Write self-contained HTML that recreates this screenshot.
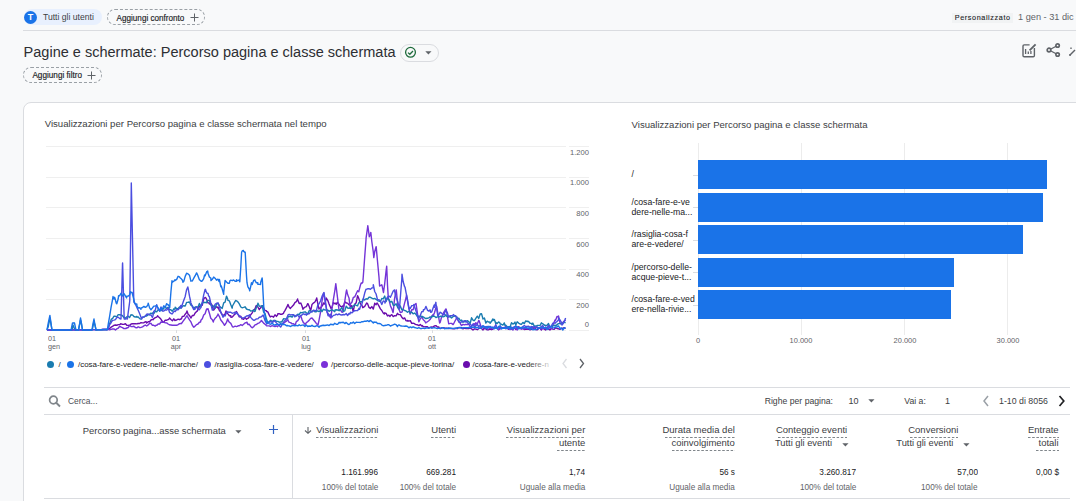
<!DOCTYPE html>
<html><head><meta charset="utf-8"><style>
html,body{margin:0;padding:0;}
body{width:1080px;height:501px;overflow:hidden;position:relative;background:#f8f9fa;font-family:"Liberation Sans", sans-serif;}
.t{position:absolute;white-space:nowrap;z-index:3;}
</style></head><body>
<div style="position:absolute;left:1076px;top:0px;width:4px;height:501px;background:#fff;z-index:5"></div>
<div style="position:absolute;left:24px;top:9px;width:78px;height:16px;background:#e8f0fe;border-radius:8px"></div>
<div style="position:absolute;left:24px;top:11px;width:13px;height:13px;background:#1a73e8;border-radius:50%"></div>
<div class="t" style="left:-269.50px;width:600px;text-align:center;top:12.88px;font-size:9px;line-height:9px;color:#fff;font-weight:700;">T</div>
<div class="t" style="left:43.00px;top:12.72px;font-size:8.6px;line-height:8.6px;color:#3c4043;font-weight:400;">Tutti gli utenti</div>
<div style="position:absolute;left:107px;top:9px;width:98px;height:16px;border:1px dashed #9aa0a6;border-radius:8px;box-sizing:border-box"></div>
<div class="t" style="left:116.60px;top:14.70px;font-size:8.15px;line-height:8.15px;color:#202124;font-weight:400;-webkit-text-stroke:0.15px #202124;">Aggiungi confronto</div>
<svg style="position:absolute;left:190px;top:12.5px" width="9" height="9" viewBox="0 0 9 9"><path d="M4.5 0.5V8.5M0.5 4.5H8.5" stroke="#5f6368" stroke-width="1"/></svg>
<div style="position:absolute;left:952px;top:13px;width:61px;height:10px;background:#f1f3f4"></div>
<div class="t" style="left:954.80px;top:14.11px;font-size:7.2px;line-height:7.2px;color:#202124;font-weight:400;letter-spacing:0.62px;-webkit-text-stroke:0.1px #202124;">Personalizzato</div>
<div class="t" style="left:1018.00px;top:13.21px;font-size:9.2px;line-height:9.2px;color:#5f6368;font-weight:400;">1 gen - 31 dic</div>
<div style="position:absolute;left:23px;top:30px;width:1053px;height:1px;background:#dadce0"></div>
<div class="t" style="left:23.60px;top:44.51px;font-size:14.52px;line-height:14.52px;color:#2d2f33;font-weight:400;">Pagine e schermate: Percorso pagina e classe schermata</div>
<div style="position:absolute;left:399.5px;top:43.5px;width:39px;height:18px;border:1px solid #dadce0;border-radius:9px;box-sizing:border-box"></div>
<svg style="position:absolute;left:404px;top:46px" width="13" height="13" viewBox="0 0 13 13"><circle cx="6.5" cy="6.3" r="4.9" fill="none" stroke="#1e6b3c" stroke-width="1.3"/><path d="M4 6.6L5.8 8.3L9 5" fill="none" stroke="#1e6b3c" stroke-width="1.3"/></svg>
<svg style="position:absolute;left:424.5px;top:50.5px" width="7" height="4" viewBox="0 0 7 4"><path d="M0.3 0.3H6.5L3.4 3.6Z" fill="#5f6368"/></svg>
<div style="position:absolute;left:23px;top:67px;width:79px;height:16px;border:1px dashed #9aa0a6;border-radius:8px;box-sizing:border-box"></div>
<div class="t" style="left:32.40px;top:71.86px;font-size:8.2px;line-height:8.2px;color:#202124;font-weight:400;-webkit-text-stroke:0.15px #202124;">Aggiungi filtro</div>
<svg style="position:absolute;left:87px;top:70.5px" width="9" height="9" viewBox="0 0 9 9"><path d="M4.5 0.5V8.5M0.5 4.5H8.5" stroke="#5f6368" stroke-width="1"/></svg>
<svg style="position:absolute;left:1021px;top:42px" width="17" height="16" viewBox="0 0 17 16">
<path d="M8.6 2.9H3.2Q2 2.9 2 4.1V13.6Q2 14.8 3.2 14.8H12.2Q13.4 14.8 13.4 13.6V6" fill="none" stroke="#5f6368" stroke-width="1.4"/>
<path d="M4.6 7V12M7.3 9.4V12M9.9 9V12" stroke="#5f6368" stroke-width="1.3"/>
<path d="M8.6 8.4L14.6 2.4" stroke="#5f6368" stroke-width="1.9"/>
</svg>
<svg style="position:absolute;left:1046px;top:42px" width="16" height="16" viewBox="0 0 16 16">
<path d="M3 8L11.6 3.5M3 8L11.6 12.5" stroke="#5f6368" stroke-width="1.4"/>
<circle cx="3" cy="8" r="1.8" fill="#fff" stroke="#5f6368" stroke-width="1.7"/>
<circle cx="11.6" cy="3.5" r="1.7" fill="#fff" stroke="#5f6368" stroke-width="1.7"/>
<circle cx="11.6" cy="12.5" r="1.7" fill="#fff" stroke="#5f6368" stroke-width="1.7"/>
</svg>
<svg style="position:absolute;left:1068px;top:45px" width="10" height="12" viewBox="0 0 10 12">
<path d="M2 10L7 5" stroke="#5f6368" stroke-width="1.5"/><circle cx="2" cy="10" r="1" fill="#5f6368"/>
<path d="M3 2.5V4M2.2 3.2H3.8" stroke="#5f6368" stroke-width="0.8"/>
</svg>
<div style="position:absolute;left:23px;top:102px;width:1100px;height:420px;background:#fff;border:1px solid #dadce0;border-radius:8px;box-sizing:border-box"></div>
<div class="t" style="left:44.70px;top:119.47px;font-size:9.6px;line-height:9.6px;color:#3c4043;font-weight:400;">Visualizzazioni per Percorso pagina e classe schermata nel tempo</div>
<div class="t" style="left:631.60px;top:119.52px;font-size:9.55px;line-height:9.55px;color:#3c4043;font-weight:400;">Visualizzazioni per Percorso pagina e classe schermata</div>
<div style="position:absolute;left:46px;top:146px;width:520px;height:1px;background:#efefef"></div>
<div style="position:absolute;left:569px;top:146px;width:20px;height:1px;background:#efefef"></div>
<div class="t" style="left:-11.00px;width:600px;text-align:right;top:148.57px;font-size:7.6px;line-height:7.6px;color:#5f6368;font-weight:400;">1.200</div>
<div style="position:absolute;left:46px;top:177px;width:520px;height:1px;background:#efefef"></div>
<div style="position:absolute;left:569px;top:177px;width:20px;height:1px;background:#efefef"></div>
<div class="t" style="left:-11.00px;width:600px;text-align:right;top:179.25px;font-size:7.6px;line-height:7.6px;color:#5f6368;font-weight:400;">1.000</div>
<div style="position:absolute;left:46px;top:207px;width:520px;height:1px;background:#efefef"></div>
<div style="position:absolute;left:569px;top:207px;width:20px;height:1px;background:#efefef"></div>
<div class="t" style="left:-11.00px;width:600px;text-align:right;top:209.93px;font-size:7.6px;line-height:7.6px;color:#5f6368;font-weight:400;">800</div>
<div style="position:absolute;left:46px;top:238px;width:520px;height:1px;background:#efefef"></div>
<div style="position:absolute;left:569px;top:238px;width:20px;height:1px;background:#efefef"></div>
<div class="t" style="left:-11.00px;width:600px;text-align:right;top:240.61px;font-size:7.6px;line-height:7.6px;color:#5f6368;font-weight:400;">600</div>
<div style="position:absolute;left:46px;top:269px;width:520px;height:1px;background:#efefef"></div>
<div style="position:absolute;left:569px;top:269px;width:20px;height:1px;background:#efefef"></div>
<div class="t" style="left:-11.00px;width:600px;text-align:right;top:271.29px;font-size:7.6px;line-height:7.6px;color:#5f6368;font-weight:400;">400</div>
<div style="position:absolute;left:46px;top:299px;width:520px;height:1px;background:#efefef"></div>
<div style="position:absolute;left:569px;top:299px;width:20px;height:1px;background:#efefef"></div>
<div class="t" style="left:-11.00px;width:600px;text-align:right;top:301.97px;font-size:7.6px;line-height:7.6px;color:#5f6368;font-weight:400;">200</div>
<div style="position:absolute;left:46px;top:330px;width:520px;height:1px;background:#efefef"></div>
<div style="position:absolute;left:569px;top:330px;width:20px;height:1px;background:#efefef"></div>
<div class="t" style="left:-11.00px;width:600px;text-align:right;top:320.65px;font-size:7.6px;line-height:7.6px;color:#5f6368;font-weight:400;">0</div>
<div class="t" style="left:48.00px;top:334.80px;font-size:7.8px;line-height:7.8px;color:#5f6368;font-weight:400;transform:scaleX(0.93);transform-origin:left top;">01</div>
<div class="t" style="left:48.00px;top:342.80px;font-size:7.8px;line-height:7.8px;color:#5f6368;font-weight:400;transform:scaleX(0.93);transform-origin:left top;">gen</div>
<div class="t" style="left:-124.00px;width:600px;text-align:center;top:334.80px;font-size:7.8px;line-height:7.8px;color:#5f6368;font-weight:400;transform:scaleX(0.93);transform-origin:center top;">01</div>
<div class="t" style="left:-124.00px;width:600px;text-align:center;top:342.80px;font-size:7.8px;line-height:7.8px;color:#5f6368;font-weight:400;transform:scaleX(0.93);transform-origin:center top;">apr</div>
<div style="position:absolute;left:176px;top:330px;width:1px;height:3px;background:#dadce0"></div>
<div class="t" style="left:5.50px;width:600px;text-align:center;top:334.80px;font-size:7.8px;line-height:7.8px;color:#5f6368;font-weight:400;transform:scaleX(0.93);transform-origin:center top;">01</div>
<div class="t" style="left:5.50px;width:600px;text-align:center;top:342.80px;font-size:7.8px;line-height:7.8px;color:#5f6368;font-weight:400;transform:scaleX(0.93);transform-origin:center top;">lug</div>
<div style="position:absolute;left:305px;top:330px;width:1px;height:3px;background:#dadce0"></div>
<div class="t" style="left:132.00px;width:600px;text-align:center;top:334.80px;font-size:7.8px;line-height:7.8px;color:#5f6368;font-weight:400;transform:scaleX(0.93);transform-origin:center top;">01</div>
<div class="t" style="left:132.00px;width:600px;text-align:center;top:342.80px;font-size:7.8px;line-height:7.8px;color:#5f6368;font-weight:400;transform:scaleX(0.93);transform-origin:center top;">ott</div>
<div style="position:absolute;left:432px;top:330px;width:1px;height:3px;background:#dadce0"></div>
<svg style="position:absolute;left:0;top:0;z-index:2" width="1080" height="501" viewBox="0 0 1080 501">
<polyline fill="none" stroke="#6a0dad" stroke-width="1.4" stroke-linejoin="round" points="47.0,330.0 48.4,330.0 49.9,330.0 51.3,330.0 52.7,330.0 54.1,329.9 55.5,329.9 57.0,329.9 58.4,329.9 59.8,329.9 61.2,329.9 62.7,329.9 64.1,329.9 65.5,329.8 67.0,329.8 68.4,329.8 69.8,329.8 71.2,329.8 72.7,329.8 74.1,329.8 75.5,329.8 76.9,329.8 78.3,329.7 79.8,329.7 81.2,329.7 82.6,329.7 84.0,329.7 85.5,329.7 86.9,329.7 88.3,329.7 89.7,329.6 91.2,329.6 92.6,329.6 94.0,329.6 95.4,329.6 96.9,329.6 98.3,329.6 99.7,329.6 101.1,329.6 102.6,329.5 104.0,329.5 105.4,329.5 106.8,329.5 107.4,329.5 108.3,328.9 109.7,328.4 111.1,327.2 112.5,326.4 114.0,325.2 114.6,325.3 115.4,325.0 116.8,325.3 118.2,324.6 119.7,324.6 121.0,323.7 121.1,323.9 122.5,324.2 123.9,324.4 125.4,323.7 126.8,325.3 128.2,325.4 129.0,325.3 129.6,325.4 131.1,324.0 132.5,323.7 133.9,323.8 135.3,323.8 136.8,323.9 137.0,323.7 138.2,323.5 139.6,323.5 141.0,322.6 142.5,322.9 143.9,322.7 145.3,321.8 146.5,322.0 146.7,323.0 148.2,321.8 149.6,321.7 151.0,320.0 152.4,319.4 153.0,319.7 153.8,318.7 155.3,317.7 156.7,317.1 157.7,315.7 158.1,316.5 159.6,317.8 161.0,319.3 162.4,321.5 162.5,322.0 163.8,322.2 165.2,320.2 166.7,320.2 168.1,319.7 169.0,319.0 169.5,318.0 170.9,319.5 172.4,320.8 173.8,318.8 175.0,320.5 175.2,320.2 176.7,320.0 178.1,319.2 179.5,319.7 180.9,319.0 181.4,318.9 182.3,316.4 183.8,316.3 185.2,314.2 186.6,312.5 187.0,311.0 188.1,314.2 189.5,315.6 190.9,317.9 191.0,318.0 192.3,315.5 193.8,315.5 195.2,312.9 196.6,311.4 197.4,311.0 198.0,308.7 199.4,306.8 200.9,305.1 202.3,305.2 203.7,298.8 205.1,297.4 206.0,298.0 206.6,299.2 208.0,302.9 209.3,303.0 209.4,304.0 210.8,303.4 212.3,305.4 213.3,310.0 213.7,310.1 215.1,308.0 216.5,306.7 218.0,308.1 218.0,307.0 219.4,310.6 220.8,312.1 222.2,314.6 223.0,315.7 223.7,315.0 225.1,314.0 226.0,311.0 226.5,312.3 227.9,313.9 229.4,315.7 230.8,315.8 231.0,317.3 232.2,317.1 233.6,315.5 235.1,313.7 235.7,312.5 236.5,311.5 237.9,314.2 239.3,316.9 240.8,316.2 242.0,318.9 242.2,318.7 243.6,319.4 245.0,317.4 246.5,319.3 247.9,318.3 248.8,317.7 249.3,316.7 250.7,314.8 252.2,312.9 253.6,310.0 255.0,308.9 256.0,306.0 256.4,305.6 257.9,307.0 259.3,309.7 259.6,308.8 260.7,307.9 262.1,305.8 263.1,306.0 263.6,307.8 265.0,310.5 266.4,310.6 266.7,311.5 267.8,311.9 269.3,315.2 270.3,316.9 270.7,316.7 272.1,316.2 273.5,317.2 275.0,314.8 276.4,316.4 277.5,315.0 277.8,313.8 279.2,313.6 280.6,314.3 282.1,314.2 283.5,313.3 283.8,312.4 284.9,310.6 286.4,307.8 287.8,305.1 288.0,304.5 289.2,307.2 290.4,308.5 290.6,308.0 292.1,306.6 293.5,305.1 294.9,302.6 296.3,301.7 297.6,299.0 297.8,299.9 299.2,303.6 300.6,303.2 300.8,303.0 302.0,306.0 303.0,309.3 303.4,308.4 304.9,307.2 306.3,306.7 307.7,303.6 308.0,303.7 309.1,306.3 310.6,310.5 311.0,309.3 312.0,304.4 313.4,303.1 314.9,302.0 316.3,299.4 316.7,298.0 317.7,303.1 319.0,309.0 319.1,308.4 320.6,308.0 322.0,306.0 323.0,304.5 323.4,303.0 324.8,304.1 326.2,298.6 326.3,298.0 327.7,300.3 329.1,304.1 330.5,307.2 331.0,308.5 331.9,307.4 333.4,302.6 334.8,303.7 336.0,303.0 336.2,304.4 337.6,302.3 339.1,304.4 340.5,306.3 341.9,306.8 342.3,306.0 343.3,307.0 344.8,302.0 346.2,302.6 346.3,303.0 347.6,303.1 349.0,304.9 350.0,304.5 350.5,306.8 351.9,305.6 353.0,311.0 353.3,311.2 354.7,304.2 356.2,302.7 357.6,295.7 358.0,296.5 359.0,299.1 360.4,303.7 361.9,305.3 362.8,307.7 363.3,307.3 364.7,306.4 366.1,304.0 366.8,303.0 367.6,303.8 369.0,307.4 370.4,308.4 370.8,307.7 371.8,306.6 373.3,309.1 374.7,303.3 376.1,304.8 377.0,303.0 377.5,303.5 379.0,306.1 380.4,308.9 381.8,310.5 383.2,313.0 384.3,314.0 384.7,312.8 386.1,313.4 387.5,315.9 388.9,315.2 390.0,316.5 390.4,315.5 391.8,314.7 393.2,316.6 394.6,315.7 396.1,315.9 397.5,313.3 398.0,314.0 398.9,314.6 400.3,314.6 401.8,317.2 403.2,318.8 404.6,317.9 406.0,320.6 407.5,321.1 407.5,320.5 408.9,321.1 410.3,320.6 411.7,323.4 413.1,323.2 414.6,323.7 415.0,324.2 416.0,324.6 417.4,324.8 418.9,325.6 420.3,324.5 421.7,325.9 422.2,325.4 423.1,326.5 424.6,326.9 426.0,326.6 427.4,326.8 428.8,328.1 429.4,327.8 430.2,327.5 431.7,327.0 433.1,327.1 434.2,326.0 434.5,326.0 435.9,325.6 437.4,327.0 438.8,326.9 439.0,327.8 440.2,328.2 441.6,328.0 443.1,327.6 444.5,327.9 445.9,328.3 447.4,328.1 448.8,328.6 450.2,328.1 451.6,328.6 453.1,328.8 454.5,328.9 455.9,328.0 457.3,328.6 458.8,327.5 460.2,327.9 461.6,327.6 463.0,328.9 464.4,328.0 465.9,328.5 467.3,328.5 468.7,328.6 470.1,328.1 471.6,328.9 473.0,330.0 474.4,328.8 475.8,329.2 477.3,329.7 478.7,328.7 480.1,327.8 481.5,328.4 483.0,329.9 484.4,327.5 485.0,329.0 485.8,328.5 487.2,329.9 488.7,329.7 490.1,329.0 491.5,329.7 492.9,329.1 494.4,327.9 495.8,327.5 497.2,328.4 498.6,329.7 500.1,328.4 501.5,328.1 502.9,328.2 504.3,327.5 505.8,328.8 507.2,327.8 508.6,329.2 510.0,326.7 511.5,329.1 512.9,328.3 514.3,327.1 515.7,329.5 517.2,328.6 518.6,326.8 520.0,328.0 521.4,329.0 522.9,328.4 524.3,329.5 525.7,329.4 527.1,329.3 528.6,329.0 530.0,329.9 531.4,329.3 532.8,329.1 534.3,326.8 535.7,329.5 537.1,329.9 538.5,328.4 540.0,328.2 541.4,330.0 542.8,327.1 544.2,329.1 545.6,330.0 547.1,327.8 548.5,329.2 549.9,330.0 551.4,328.5 552.8,329.1 554.2,329.4 555.6,327.7 557.0,328.5 558.5,328.8 559.9,329.3 561.3,328.5 562.8,328.3 564.2,327.6 565.6,328.5"/>
<polyline fill="none" stroke="#7434d8" stroke-width="1.4" stroke-linejoin="round" points="47.0,330.0 48.4,330.0 49.9,330.0 51.3,330.0 52.7,330.0 54.1,329.9 55.5,329.9 57.0,329.9 58.4,329.9 59.8,329.9 61.2,329.9 62.7,329.9 64.1,329.9 65.5,329.8 67.0,329.8 68.4,329.8 69.8,329.8 71.2,329.8 72.7,329.8 74.1,329.8 75.5,329.8 76.9,329.8 78.3,329.7 79.8,329.7 81.2,329.7 82.6,329.7 84.0,329.7 85.5,329.7 86.9,329.7 88.3,329.7 89.7,329.6 91.2,329.6 92.6,329.6 94.0,329.6 95.4,329.6 96.9,329.6 98.3,329.6 99.7,329.6 101.1,329.6 102.6,329.5 104.0,329.5 105.4,329.5 106.8,329.5 107.4,329.5 108.3,329.3 109.7,329.8 111.1,329.4 112.5,329.0 114.0,329.0 114.6,329.3 115.4,330.0 116.8,328.9 118.2,328.2 119.7,326.3 121.0,326.9 121.1,327.2 122.5,327.6 123.9,328.6 125.4,328.5 125.8,328.5 126.8,328.0 128.2,327.5 129.6,325.6 130.6,326.0 131.1,326.6 132.5,326.5 133.9,326.3 135.3,327.5 136.8,327.9 138.2,326.8 139.6,327.3 140.0,327.7 141.0,327.4 142.5,326.8 143.9,325.9 145.3,325.0 146.7,326.0 148.2,324.9 149.6,323.1 149.7,323.7 151.0,323.3 152.4,325.3 153.8,325.3 155.3,326.1 156.0,325.3 156.7,325.4 158.1,323.9 159.6,324.0 161.0,322.0 162.4,322.2 163.8,322.0 164.0,322.0 165.2,322.9 166.7,322.9 168.1,324.0 169.0,324.5 169.5,324.8 170.9,325.0 172.4,325.3 173.8,325.2 175.0,325.3 175.2,325.1 176.7,325.3 178.1,324.6 179.5,323.7 180.9,323.5 181.4,323.7 182.3,322.3 183.8,320.2 185.2,318.4 186.6,316.2 187.0,315.7 188.1,317.7 189.5,319.9 190.9,321.8 192.3,325.2 193.4,326.9 193.8,327.2 195.2,325.9 196.6,324.6 198.0,324.0 199.4,322.2 200.6,322.0 200.9,320.2 202.3,318.7 203.7,315.0 205.1,313.7 206.6,309.0 207.0,309.3 208.0,308.7 209.4,313.2 210.8,318.3 212.3,319.7 213.3,322.0 213.7,320.4 215.1,318.3 216.5,316.9 218.0,314.5 218.0,314.0 219.4,316.6 220.8,320.0 222.2,321.8 223.7,323.8 224.5,325.3 225.1,324.5 226.5,322.3 227.7,318.9 227.9,320.0 229.4,322.3 230.8,323.4 232.2,326.3 232.5,326.9 233.6,327.0 235.1,326.2 236.5,326.6 237.9,326.1 238.0,325.8 239.3,325.7 240.8,324.6 242.2,325.5 243.6,324.3 245.0,322.9 246.5,322.5 247.0,322.2 247.9,324.6 249.3,324.3 250.7,326.4 252.2,327.8 252.4,327.6 253.6,326.7 255.0,324.9 256.4,324.5 257.9,323.4 259.3,322.8 260.7,321.5 261.4,320.4 262.1,321.2 263.6,323.1 265.0,324.3 266.4,325.6 266.7,325.8 267.8,325.9 269.3,325.9 270.7,326.5 272.1,325.7 273.5,326.1 275.0,326.5 276.4,325.9 277.5,326.7 277.8,326.3 279.2,324.7 280.6,324.4 282.1,324.3 283.5,323.4 284.9,322.2 286.4,321.2 287.8,319.6 288.0,320.4 289.2,322.4 290.6,322.6 292.1,323.9 293.5,323.7 294.9,325.1 295.0,325.3 296.3,321.7 297.8,320.7 299.2,318.3 300.0,316.0 300.6,315.6 302.0,319.6 303.4,322.6 304.9,323.8 305.0,325.0 306.3,322.7 307.7,321.6 309.1,320.4 310.6,318.4 312.0,318.0 313.4,319.7 314.9,321.5 316.3,323.4 317.7,325.0 318.0,325.0 319.1,319.8 320.6,311.9 322.0,301.0 323.4,294.0 323.7,293.0 324.8,298.1 326.2,306.5 327.0,312.0 327.7,312.9 329.1,315.2 330.5,317.7 331.0,318.0 331.9,309.6 333.4,299.4 334.8,290.8 335.8,283.6 336.2,286.8 337.6,298.4 339.0,310.0 339.1,310.0 340.5,310.0 341.9,312.2 343.0,312.0 343.3,310.3 344.8,301.1 346.2,291.6 346.6,290.0 347.6,294.6 349.0,297.9 350.0,306.0 350.5,303.9 351.9,302.3 353.3,297.5 354.7,296.9 356.2,293.9 356.4,293.3 357.6,290.7 358.8,291.7 359.0,290.6 360.4,285.3 361.2,283.0 361.9,283.3 362.8,282.2 363.3,276.5 364.7,257.0 366.0,240.0 366.1,237.8 367.6,227.3 367.8,225.6 369.0,234.4 369.3,236.8 370.4,234.5 370.8,232.4 371.8,241.5 373.3,252.1 373.8,257.6 374.7,251.8 376.1,246.7 376.2,246.8 377.5,261.3 379.0,277.2 379.6,286.0 380.4,285.7 381.8,284.8 382.0,285.4 383.2,291.4 383.5,292.5 384.7,283.6 386.1,270.8 386.7,266.2 387.5,285.3 388.3,298.0 388.9,299.5 390.4,305.7 391.8,308.9 393.0,312.5 393.2,312.2 394.6,298.3 396.1,290.7 396.3,290.0 397.5,302.6 398.0,307.7 398.9,309.3 400.3,312.6 401.8,312.1 402.0,312.0 403.2,309.0 404.6,303.1 406.0,298.0 406.5,295.0 407.5,300.9 408.9,307.7 410.0,314.0 410.3,313.9 411.7,309.8 413.1,309.7 414.6,304.7 416.0,303.4 417.4,313.1 418.6,320.6 418.9,321.8 420.3,318.8 421.7,317.5 422.2,317.0 423.1,319.4 424.6,320.9 425.8,323.0 426.0,322.4 427.4,321.8 428.8,320.8 430.0,319.4 430.2,319.5 431.7,316.1 433.0,314.6 433.1,315.9 434.5,312.7 435.9,307.7 436.6,306.2 437.4,310.8 438.8,318.2 439.6,323.0 440.2,322.3 441.6,317.0 443.1,314.4 443.2,313.4 444.5,311.1 445.9,308.9 446.2,309.2 447.4,316.4 448.6,323.0 448.8,323.8 450.2,323.4 451.6,323.4 453.1,324.6 453.4,324.2 454.5,322.0 455.9,319.4 457.0,317.0 457.3,318.8 458.8,321.3 460.2,323.0 460.6,324.2 461.6,325.5 463.0,324.4 464.4,324.9 465.9,324.3 467.3,324.7 468.7,324.0 470.1,326.8 471.6,326.5 473.0,324.0 474.4,323.8 475.0,325.4 475.8,322.7 477.3,324.0 478.7,320.5 479.1,320.6 480.1,323.8 481.0,326.6 481.5,326.5 483.0,327.2 484.4,326.8 485.0,328.0 485.8,328.0 487.2,326.7 488.7,328.0 490.1,328.4 491.5,328.5 492.9,327.9 494.4,327.3 495.8,328.3 497.2,327.7 498.6,329.6 500.1,328.9 501.5,328.1 502.9,327.8 504.3,327.6 505.8,327.4 507.2,328.0 508.6,328.6 510.0,328.8 511.5,328.9 512.9,330.0 514.3,327.8 515.7,328.5 517.2,330.0 518.6,326.8 520.0,328.5 520.0,328.0 521.4,328.6 522.9,328.6 524.3,328.8 525.7,328.2 527.1,328.7 528.6,328.4 530.0,329.0 531.4,326.6 532.8,327.5 534.3,328.3 535.7,327.3 537.1,327.3 538.5,328.8 540.0,327.6 541.4,328.7 542.8,328.8 544.2,328.4 545.6,328.6 547.1,328.0 548.5,326.8 549.9,328.0 551.4,328.4 552.0,328.0 552.8,325.4 554.2,322.0 555.0,320.0 555.6,320.2 557.0,316.5 558.5,316.9 558.5,316.0 559.9,322.7 561.0,324.0 561.3,323.1 562.8,322.6 564.2,321.1 565.6,320.0"/>
<polyline fill="none" stroke="#1a7cb0" stroke-width="1.4" stroke-linejoin="round" points="47.0,330.0 48.4,326.1 48.5,325.0 49.9,318.9 50.0,318.0 51.3,326.1 52.0,330.0 52.7,330.0 54.1,330.0 55.5,330.0 57.0,330.0 58.4,330.0 59.8,330.0 61.2,330.0 62.7,330.0 64.1,330.0 65.5,330.0 67.0,330.0 68.4,330.0 69.8,330.0 71.2,330.0 72.0,330.0 72.7,326.4 73.0,325.0 74.1,327.7 75.0,330.0 75.5,330.0 76.9,330.0 78.3,330.0 78.5,330.0 79.8,323.6 80.5,320.0 81.2,322.4 82.5,330.0 82.6,330.0 84.0,330.0 85.5,330.0 86.9,330.0 88.3,330.0 89.7,330.0 91.2,330.0 92.0,330.0 92.6,328.0 94.0,321.0 94.0,321.7 95.4,326.7 96.0,330.0 96.9,330.0 98.3,329.9 99.7,329.8 101.1,329.8 102.6,329.7 104.0,329.6 105.4,329.6 106.8,329.5 107.4,329.5 108.3,327.6 109.7,323.4 111.1,320.1 111.4,319.0 112.5,318.6 114.0,316.2 115.4,316.3 116.8,316.9 117.8,315.0 118.2,314.7 119.7,314.8 121.1,315.0 122.5,315.7 123.9,317.5 124.2,317.3 125.4,318.3 126.8,316.8 128.2,316.2 129.6,317.5 131.1,314.7 131.4,315.0 132.5,314.9 133.9,316.5 135.3,317.1 136.8,316.4 137.0,317.3 138.2,316.9 139.6,318.6 141.0,319.0 141.0,319.2 142.5,317.1 143.9,317.1 145.3,316.0 146.5,315.7 146.7,316.0 148.2,314.8 149.6,314.1 151.0,313.2 152.4,313.8 153.0,312.5 153.8,313.5 155.3,311.2 156.7,311.9 158.1,309.7 159.3,310.0 159.6,310.0 161.0,310.2 162.4,310.5 163.8,307.9 165.2,307.8 165.7,307.7 166.7,308.4 168.1,307.3 169.5,309.7 170.9,309.8 172.0,311.0 172.4,311.2 173.8,308.8 175.0,309.3 175.2,307.1 176.7,308.8 178.1,308.5 179.5,307.1 180.9,308.3 182.3,306.5 183.8,305.6 184.6,306.0 185.2,306.1 186.6,302.4 188.1,302.3 189.4,302.0 189.5,302.1 190.9,305.1 192.3,305.8 193.8,308.2 194.2,308.5 195.2,307.0 196.6,306.9 198.0,307.3 199.0,304.5 199.4,303.5 200.9,306.8 202.3,302.4 203.7,302.6 205.1,302.3 206.6,302.8 207.0,301.3 208.0,300.4 209.4,300.4 210.8,304.9 212.3,306.2 213.3,306.0 213.7,306.5 215.1,308.1 216.5,304.2 218.0,303.3 218.0,303.0 219.4,306.1 220.8,307.4 221.3,307.7 222.2,308.4 223.7,302.9 225.1,302.1 226.5,296.1 227.7,299.0 227.9,300.4 229.4,300.9 230.8,304.7 232.2,308.2 232.5,306.0 233.6,304.0 235.1,301.3 235.7,300.5 236.5,300.8 237.9,301.9 239.3,303.9 240.8,307.0 242.0,307.7 242.2,307.7 243.6,307.4 245.0,306.8 245.2,307.0 246.5,309.0 247.9,309.6 248.8,309.7 249.3,309.7 250.7,311.0 252.2,310.7 253.6,310.1 254.2,311.5 255.0,311.4 256.4,307.6 257.8,304.3 257.9,303.1 259.3,306.3 260.7,306.1 261.4,306.0 262.1,305.7 263.6,312.0 265.0,313.6 265.0,313.3 266.4,318.8 267.6,322.2 267.8,322.3 269.3,321.6 270.7,320.3 272.1,321.6 273.5,320.6 274.0,320.4 275.0,320.5 276.4,321.2 277.8,321.4 279.2,322.2 280.6,321.9 281.0,322.2 282.1,321.4 283.5,318.8 284.9,318.9 286.4,318.7 287.8,318.1 288.0,316.9 289.2,316.4 290.0,316.5 290.6,316.2 292.1,317.2 293.5,315.1 294.9,315.6 296.3,316.0 297.8,314.1 299.2,314.7 300.6,312.4 302.0,312.8 303.4,312.1 304.9,311.9 305.0,311.7 306.3,312.8 307.7,314.0 309.1,310.8 310.6,310.9 312.0,311.9 313.4,310.2 314.9,311.7 316.3,311.8 317.7,310.8 319.1,311.6 320.0,311.0 320.6,309.4 322.0,311.6 323.4,309.2 324.8,310.0 326.2,310.0 327.7,310.1 329.1,311.3 330.5,310.4 331.9,309.8 333.4,310.7 334.8,311.7 335.0,310.0 336.2,309.8 337.6,310.0 339.1,310.7 340.5,309.4 341.9,307.5 343.3,311.4 344.8,310.9 346.2,306.1 347.6,308.0 349.0,308.3 350.0,307.7 350.5,308.6 351.9,307.7 353.3,306.1 354.7,304.5 356.2,305.4 357.6,305.9 358.0,304.5 359.0,302.5 360.4,301.6 361.9,302.1 363.3,298.7 364.7,300.0 366.1,298.8 367.6,299.1 368.4,298.0 369.0,297.2 370.4,297.3 371.8,298.2 373.3,298.9 374.7,298.4 376.1,299.5 377.0,299.7 377.5,300.6 379.0,301.1 380.4,301.7 381.8,298.4 383.2,298.8 384.7,296.0 386.1,301.6 387.5,298.1 388.3,299.0 388.9,299.7 390.4,302.1 391.8,301.3 393.0,304.5 393.2,305.2 394.6,305.3 396.1,303.8 397.5,307.1 398.9,308.8 400.3,306.0 401.8,309.7 402.7,309.3 403.2,309.7 404.6,310.5 406.0,310.9 407.5,312.3 408.9,311.2 410.3,312.8 411.7,312.0 412.0,312.5 413.1,313.8 414.6,313.0 416.0,314.4 417.4,316.7 418.9,316.3 420.3,316.5 421.0,317.0 421.7,316.2 423.1,316.8 424.6,317.9 426.0,318.7 427.0,318.2 427.4,318.4 428.8,317.9 430.2,316.9 431.7,317.6 431.8,316.4 433.1,316.2 434.5,316.2 435.9,317.5 437.4,316.9 438.8,316.8 439.0,317.0 440.2,316.3 441.6,316.3 443.1,316.8 444.5,316.4 445.9,314.8 446.2,315.8 447.4,316.6 448.8,316.9 450.2,316.5 451.0,317.6 451.6,318.0 453.1,316.6 454.5,316.0 455.8,315.8 455.9,316.6 457.3,318.4 458.8,318.2 460.2,320.5 460.6,320.6 461.6,320.1 463.0,322.4 464.4,320.7 465.9,321.9 466.6,321.2 467.3,320.7 468.7,321.6 470.1,323.5 471.6,317.8 473.0,320.2 473.8,320.6 474.4,320.6 475.8,318.4 477.3,316.2 478.7,318.5 480.1,314.3 480.3,314.0 481.5,313.6 483.0,319.0 484.4,318.0 485.5,321.7 485.8,323.0 487.2,321.2 488.7,322.1 490.0,322.0 490.1,323.4 491.5,321.4 492.9,318.9 493.0,320.5 494.4,319.5 495.8,323.7 496.0,322.5 497.2,323.5 498.6,321.9 500.0,323.0 500.1,324.0 501.5,324.3 502.9,325.1 504.3,322.9 505.0,325.5 505.8,325.3 507.2,326.8 508.6,326.9 510.0,326.5 510.0,327.3 511.5,322.7 512.9,324.1 514.3,323.2 515.0,322.0 515.7,325.1 517.2,321.8 518.6,323.1 520.0,324.0 520.0,324.0 521.4,324.4 522.9,322.4 524.3,323.6 525.7,320.9 527.1,321.5 527.2,321.2 528.6,321.5 530.0,323.3 531.4,323.4 532.0,324.5 532.8,323.1 534.3,326.3 535.7,325.9 537.0,326.0 537.1,325.4 538.5,325.4 540.0,325.6 541.4,322.8 542.0,323.5 542.8,323.7 544.2,325.0 545.6,325.5 547.0,325.5 547.1,325.2 548.5,323.5 549.9,327.0 551.4,326.3 552.0,326.0 552.8,325.9 554.2,325.3 555.6,325.5 557.0,325.0 557.0,324.6 558.5,323.6 559.9,323.6 561.3,323.5 562.0,324.0 562.8,323.1 564.2,322.1 565.6,323.0"/>
<polyline fill="none" stroke="#4b4ee0" stroke-width="1.4" stroke-linejoin="round" points="47.0,330.0 48.4,330.0 49.9,330.0 51.3,330.0 52.7,330.0 54.1,329.9 55.5,329.9 57.0,329.9 58.4,329.9 59.8,329.9 61.2,329.9 62.7,329.9 64.1,329.9 65.5,329.8 67.0,329.8 68.4,329.8 69.8,329.8 71.2,329.8 72.7,329.8 74.1,329.8 75.5,329.8 76.9,329.8 78.3,329.7 79.8,329.7 81.2,329.7 82.6,329.7 84.0,329.7 85.5,329.7 86.9,329.7 88.3,329.7 89.7,329.6 91.2,329.6 92.6,329.6 94.0,329.6 95.4,329.6 96.9,329.6 98.3,329.6 99.7,329.6 101.1,329.6 102.6,329.5 104.0,329.5 105.4,329.5 106.8,329.5 107.4,329.5 108.3,328.2 109.7,324.5 111.1,322.9 111.4,322.0 112.5,320.4 114.0,320.1 115.4,319.7 116.8,317.6 117.0,317.3 118.2,317.3 119.7,318.5 121.0,319.0 121.1,316.0 122.5,263.9 122.6,263.0 123.9,309.3 124.2,319.0 125.4,319.1 126.8,318.7 127.4,319.0 128.2,312.7 129.6,302.3 129.8,300.0 131.1,202.7 131.3,183.0 132.5,239.9 133.8,301.0 133.9,302.0 135.3,303.9 136.8,307.3 137.7,309.3 138.2,310.2 139.6,313.6 141.0,317.2 141.7,319.0 142.5,317.1 143.9,317.0 145.3,316.2 146.7,314.2 148.1,314.0 148.2,314.0 149.6,315.0 151.0,314.9 152.4,317.3 153.0,315.7 153.8,311.2 155.3,310.0 156.7,304.6 157.0,306.0 158.1,308.2 159.6,311.3 161.0,307.0 162.4,311.0 162.5,311.0 163.8,311.1 165.2,309.7 166.7,310.1 167.3,309.3 168.1,307.8 169.5,312.4 170.9,313.3 172.0,314.0 172.4,313.6 173.8,311.6 175.0,311.0 175.2,311.5 176.7,309.6 178.1,309.7 179.5,308.1 180.9,305.4 181.4,307.7 182.3,304.6 183.8,300.3 185.2,296.4 186.6,289.7 187.8,287.0 188.1,288.2 189.5,296.2 190.9,302.7 191.0,303.0 192.3,306.6 193.8,309.6 195.0,309.3 195.2,308.3 196.6,306.7 198.0,309.4 199.4,309.7 200.6,307.7 200.9,307.7 202.3,302.2 203.7,294.9 205.1,289.4 205.4,289.3 206.6,292.9 208.0,293.5 208.5,295.7 209.4,296.8 210.8,303.2 211.7,307.7 212.3,310.1 213.7,308.5 215.1,304.3 216.5,303.2 218.0,303.3 218.0,303.0 219.4,306.1 220.8,312.4 222.2,315.1 223.0,317.3 223.7,315.6 225.1,316.0 226.5,312.6 227.7,311.7 227.9,312.0 229.4,312.2 230.8,312.3 232.2,313.3 233.6,312.8 235.1,312.1 235.7,314.0 236.5,312.5 237.9,314.3 239.3,315.7 240.8,317.2 242.0,318.0 242.2,318.0 243.6,318.0 245.0,317.2 246.5,316.0 247.9,315.7 248.8,316.0 249.3,314.7 250.7,317.4 252.2,319.1 253.6,320.3 254.2,320.4 255.0,319.8 256.4,318.9 257.9,318.9 259.3,317.3 260.7,317.1 262.1,316.1 263.1,315.0 263.6,316.3 265.0,320.6 266.4,322.9 266.7,324.0 267.8,323.2 269.3,322.2 270.7,321.5 272.1,322.3 273.5,321.8 274.0,320.4 275.0,321.3 276.4,322.9 277.8,324.5 279.2,325.5 280.6,327.0 281.0,326.7 282.1,324.2 283.5,322.1 284.9,320.4 286.4,318.9 287.8,315.5 288.0,315.0 289.2,314.4 290.6,314.9 292.1,314.8 293.5,314.7 294.9,316.9 296.0,315.7 296.3,315.1 297.8,315.4 299.2,317.0 300.6,315.9 302.0,314.9 303.4,313.8 304.9,314.5 305.6,314.0 306.3,315.2 307.7,313.7 309.1,313.7 310.6,312.0 312.0,311.8 313.4,310.5 314.9,310.5 316.3,310.9 316.7,309.3 317.7,305.3 319.1,303.7 320.6,300.8 322.0,296.4 323.4,293.5 324.0,292.5 324.8,298.3 326.2,308.0 327.7,314.4 328.0,315.7 329.1,315.9 330.5,314.2 331.9,317.1 333.4,315.4 334.8,315.1 336.2,314.1 337.6,314.9 339.1,313.9 340.5,314.8 341.9,315.0 343.3,314.5 344.8,314.7 346.2,313.5 347.6,315.5 349.0,313.5 350.0,314.0 350.5,312.1 351.9,312.9 353.3,311.6 354.7,310.7 356.2,310.6 357.6,310.6 359.0,308.3 359.6,309.3 360.4,306.5 361.9,304.1 363.3,298.7 364.7,293.1 366.0,289.3 366.1,289.4 367.6,288.8 369.0,288.6 370.4,289.3 371.8,287.9 373.2,287.7 373.3,284.7 374.7,291.5 376.1,294.0 377.5,299.7 378.0,300.0 379.0,299.6 380.4,301.2 381.8,304.5 383.2,300.9 384.7,301.4 385.0,303.0 386.1,299.9 387.5,297.0 388.9,296.0 390.4,297.2 391.8,294.3 393.2,291.0 394.6,289.9 394.7,291.7 396.1,297.4 397.5,300.7 398.9,306.4 399.5,309.0 400.3,297.9 401.8,279.3 402.0,274.2 403.2,281.8 404.6,286.7 405.0,287.0 406.0,292.4 407.5,299.7 407.5,299.7 408.9,309.1 409.0,307.7 410.3,308.5 411.7,305.6 413.1,305.6 414.0,304.5 414.6,306.7 416.0,311.0 417.4,315.2 418.6,319.4 418.9,317.9 420.3,315.6 421.7,311.8 423.1,311.6 423.4,309.8 424.6,309.5 426.0,306.4 426.4,307.4 427.4,310.1 428.8,311.1 430.2,309.9 430.6,312.2 431.7,312.0 433.1,308.1 434.2,305.0 434.5,307.3 435.9,302.3 436.0,303.8 437.4,313.4 437.8,315.8 438.8,314.7 440.2,312.2 440.2,312.4 441.6,313.2 443.1,314.8 444.4,314.6 444.5,313.1 445.9,310.3 446.2,311.0 447.4,312.6 448.6,317.0 448.8,316.5 450.2,315.7 451.6,315.8 453.1,315.0 453.4,314.6 454.5,315.7 455.9,316.6 457.0,318.2 457.3,318.4 458.8,321.9 459.4,322.4 460.2,322.6 461.6,321.8 463.0,321.1 464.4,321.9 465.4,320.6 465.9,320.6 467.3,322.5 468.7,323.9 470.1,324.1 471.4,325.4 471.6,326.2 473.0,324.4 474.4,326.7 475.8,326.0 477.3,324.3 478.7,326.7 480.1,325.3 481.5,327.6 483.0,325.8 484.4,326.4 485.0,326.6 485.8,326.9 487.2,326.4 488.7,327.1 490.1,326.4 491.5,327.6 492.9,327.1 494.4,327.4 495.8,324.6 497.2,328.4 498.6,327.4 500.0,327.5 500.1,325.8 501.5,327.6 502.9,327.9 504.3,328.4 505.8,326.4 507.2,328.8 508.6,327.2 510.0,329.6 511.5,327.2 512.9,327.9 514.3,326.9 515.7,326.2 517.2,328.3 518.6,328.0 520.0,328.6 521.4,328.0 522.9,326.6 524.3,325.5 525.7,326.5 527.1,326.4 528.6,326.2 530.0,327.6 530.0,327.0 531.4,327.3 532.8,326.7 534.3,327.2 535.7,326.9 537.1,327.2 538.5,327.7 540.0,327.9 541.4,326.3 542.8,325.6 544.2,328.4 545.6,327.1 547.1,328.1 548.5,325.4 549.9,326.7 550.0,327.0 551.4,325.9 552.8,323.2 554.2,322.9 555.6,323.1 556.0,322.0 557.0,321.6 558.5,320.1 558.5,318.0 559.9,319.8 561.3,322.2 562.0,325.0 562.8,324.1 564.2,321.9 565.6,318.0"/>
<polyline fill="none" stroke="#1a73e8" stroke-width="1.4" stroke-linejoin="round" points="47.0,330.0 48.4,322.5 48.5,322.0 49.9,315.5 50.0,316.0 51.3,325.3 52.0,330.0 52.7,330.0 54.1,330.0 55.5,330.0 57.0,330.0 58.4,330.0 59.8,330.0 61.2,330.0 62.7,330.0 64.1,330.0 65.5,330.0 67.0,330.0 68.4,330.0 69.8,330.0 71.0,330.0 71.2,329.3 72.5,323.0 72.7,323.3 74.1,322.7 74.5,323.0 75.5,327.8 76.0,330.0 76.9,330.0 78.3,330.0 78.5,330.0 79.8,322.9 80.5,318.0 81.2,321.8 82.5,330.0 82.6,330.0 84.0,330.0 85.5,330.0 86.9,330.0 88.3,330.0 89.7,330.0 91.2,330.0 92.0,330.0 92.6,325.9 94.0,319.0 94.0,319.4 95.4,327.1 96.0,330.0 96.9,329.9 98.3,329.9 99.7,329.8 101.1,329.7 102.6,329.6 104.0,329.5 105.4,329.4 106.8,329.7 107.4,329.3 108.3,323.9 109.7,315.8 111.1,307.2 112.5,299.9 113.0,296.5 114.0,299.1 114.6,297.3 115.4,299.8 116.2,303.0 116.8,303.8 118.2,298.8 118.6,295.7 119.7,295.7 121.0,293.3 121.1,294.1 122.5,295.9 123.9,293.7 124.2,294.0 125.4,295.8 126.6,298.0 126.8,296.3 128.2,296.1 129.6,295.0 130.6,291.7 131.1,292.6 132.2,292.5 132.5,294.3 133.9,299.7 134.6,303.0 135.3,304.1 136.8,304.0 137.0,306.0 138.2,308.2 139.6,307.7 141.0,309.3 141.0,308.1 142.5,307.5 143.9,306.4 145.3,307.4 146.7,306.7 148.0,304.5 148.2,303.1 149.6,307.9 151.0,309.8 151.3,309.3 152.4,308.0 153.8,306.1 155.3,306.1 156.7,305.4 157.0,306.0 158.1,308.3 159.6,309.9 160.0,311.0 161.0,308.0 162.4,309.1 163.8,305.8 165.2,307.4 166.7,303.6 167.3,304.5 168.1,304.7 169.5,306.5 169.7,307.7 170.9,292.3 172.0,280.6 172.4,282.2 173.8,281.2 175.0,279.8 175.2,280.5 176.7,279.4 178.1,276.3 179.5,276.9 179.8,277.4 180.9,278.4 182.3,280.0 183.0,282.2 183.8,281.2 185.2,276.4 186.6,273.3 187.0,273.4 188.1,273.9 189.5,275.2 190.9,281.2 191.0,280.6 192.3,281.0 193.8,278.1 194.2,277.4 195.2,275.7 196.6,272.9 198.0,275.8 198.0,276.1 199.4,279.8 200.9,280.9 201.4,281.4 202.3,280.8 203.7,278.7 204.6,275.0 205.1,275.8 206.6,271.9 207.7,271.0 208.0,273.2 209.4,277.0 210.8,278.1 211.0,280.6 212.3,279.3 213.7,277.1 215.0,278.2 215.1,278.2 216.5,280.2 218.0,279.2 219.0,281.4 219.4,279.5 220.8,286.7 221.3,286.0 222.2,289.0 223.7,294.3 223.7,292.5 225.1,280.4 225.3,280.6 226.5,282.0 227.9,283.3 229.4,283.2 230.0,280.6 230.8,280.2 232.2,280.7 233.6,280.0 235.1,281.3 236.5,281.2 236.5,279.8 237.9,280.8 239.3,279.8 239.8,281.8 240.8,267.0 241.6,252.2 242.2,251.0 243.4,250.4 243.6,251.4 245.0,252.4 245.2,252.2 246.5,275.7 247.0,282.7 247.9,286.8 249.3,289.0 249.7,290.8 250.7,286.6 251.5,282.7 252.2,284.5 253.6,280.4 255.0,280.0 255.0,280.6 256.4,282.9 257.8,282.7 257.9,284.4 259.3,284.4 260.5,284.5 260.7,282.2 262.1,278.0 262.3,279.1 263.6,303.4 264.0,311.5 265.0,315.7 266.4,322.7 266.7,322.2 267.8,322.1 269.3,323.9 270.7,324.2 272.1,323.4 273.5,324.4 274.0,325.0 275.0,325.0 276.4,324.4 277.8,324.4 279.2,324.5 280.6,323.6 281.0,324.0 282.1,324.5 283.5,324.3 284.9,324.7 286.4,325.7 287.8,325.5 288.0,325.8 289.2,325.9 290.6,326.5 292.1,325.6 293.5,325.5 294.9,325.9 296.3,325.3 297.8,325.9 299.2,324.7 300.0,325.3 300.6,325.6 302.0,325.1 303.4,325.0 304.9,326.4 306.3,325.1 307.7,326.5 309.1,326.0 310.6,326.4 312.0,325.2 313.4,326.4 314.9,326.5 316.3,325.8 317.7,325.9 319.1,327.2 320.0,326.0 320.6,326.0 322.0,325.5 323.4,325.2 324.8,325.5 326.2,325.2 327.7,324.9 329.1,325.6 330.5,324.2 331.9,324.5 333.4,324.8 334.8,323.2 336.2,324.2 337.6,324.4 339.1,322.3 340.0,323.0 340.5,322.4 341.9,322.5 343.3,322.2 344.8,323.6 346.2,322.4 347.6,323.8 349.0,324.5 350.0,323.7 350.5,322.7 351.9,323.2 353.3,322.1 354.7,323.5 356.2,322.3 357.6,322.4 359.0,322.4 360.4,322.5 361.9,321.7 363.3,321.7 364.7,321.1 366.0,321.3 366.1,321.4 367.6,320.7 369.0,321.6 370.4,320.4 371.8,321.5 373.3,323.1 374.0,322.0 374.7,322.3 376.1,322.1 377.5,323.6 379.0,323.5 380.4,323.7 381.8,324.8 382.0,325.3 383.2,325.7 384.7,325.5 386.1,325.3 387.5,324.8 388.9,324.7 390.4,326.0 391.8,325.4 393.2,324.8 394.6,324.2 396.1,324.6 397.5,326.6 398.0,325.3 398.9,324.9 400.3,325.7 401.8,326.0 403.2,326.1 404.6,326.3 406.0,326.0 407.5,326.4 408.0,327.0 408.9,327.8 410.3,326.9 411.7,327.7 413.1,326.8 414.6,327.5 416.0,327.9 417.4,328.4 418.9,327.6 420.3,328.5 421.7,328.5 422.2,328.4 423.1,328.1 424.6,328.6 426.0,328.0 427.4,328.0 428.8,328.3 430.2,327.2 431.7,328.3 433.1,327.9 434.5,327.7 435.9,328.1 437.4,328.6 438.8,328.1 440.2,328.7 441.6,327.7 443.1,327.7 444.5,328.8 445.9,328.3 447.4,328.6 448.8,327.8 450.2,328.5 451.6,328.2 453.1,328.4 454.5,328.1 455.9,328.6 457.3,327.8 458.8,327.6 460.2,327.4 461.6,328.5 463.0,327.7 464.4,327.6 465.9,327.6 467.3,327.8 468.7,327.4 470.1,327.7 471.6,327.3 473.0,327.4 474.4,327.0 475.8,327.9 477.3,327.4 478.7,328.0 480.1,328.1 481.5,328.1 483.0,325.8 484.4,327.3 485.0,327.8 485.8,327.1 487.2,328.5 488.7,326.3 490.1,327.2 491.5,327.5 492.9,327.5 494.4,328.7 495.8,327.4 497.2,328.7 498.6,326.5 500.1,326.2 501.5,329.0 502.9,328.2 504.3,328.3 505.8,328.0 507.2,328.3 508.6,326.7 510.0,328.7 511.5,327.4 512.9,328.8 514.3,328.0 515.7,326.1 517.2,326.7 518.6,328.9 520.0,327.8 521.4,327.5 522.9,328.1 524.3,327.5 525.7,327.4 527.1,328.0 528.6,328.0 530.0,329.3 531.4,328.0 532.8,329.7 534.3,329.6 535.7,329.5 537.1,328.9 538.5,328.1 540.0,328.1 541.4,327.8 542.8,327.3 544.2,327.9 545.6,327.4 547.1,329.5 548.5,328.5 549.9,327.5 551.4,326.2 552.8,327.9 554.2,327.6 555.6,327.0 557.0,326.9 558.5,325.9 559.9,328.5 561.3,327.9 562.8,330.0 564.2,328.0 565.6,328.0"/>
</svg>
<div style="position:absolute;left:47.0px;top:361.2px;width:7px;height:7px;background:#1a7cb0;border-radius:50%"></div>
<div class="t" style="left:58.50px;top:361.17px;font-size:7.95px;line-height:7.95px;color:#202124;font-weight:400;">/</div>
<div style="position:absolute;left:67.0px;top:361.2px;width:7px;height:7px;background:#1a73e8;border-radius:50%"></div>
<div class="t" style="left:78.00px;top:361.17px;font-size:7.95px;line-height:7.95px;color:#202124;font-weight:400;">/cosa-fare-e-vedere-nelle-marche/</div>
<div style="position:absolute;left:204.3px;top:361.2px;width:7px;height:7px;background:#4b4ee0;border-radius:50%"></div>
<div class="t" style="left:214.50px;top:361.17px;font-size:7.95px;line-height:7.95px;color:#202124;font-weight:400;">/rasiglia-cosa-fare-e-vedere/</div>
<div style="position:absolute;left:321.0px;top:361.2px;width:7px;height:7px;background:#7a30d8;border-radius:50%"></div>
<div class="t" style="left:331.00px;top:361.17px;font-size:7.95px;line-height:7.95px;color:#202124;font-weight:400;">/percorso-delle-acque-pieve-torina/</div>
<div style="position:absolute;left:462.5px;top:361.2px;width:7px;height:7px;background:#6a0dad;border-radius:50%"></div>
<div class="t" style="left:472.50px;top:361.17px;font-size:7.95px;line-height:7.95px;color:#202124;font-weight:400;">/cosa-fare-e-vedere-n</div>
<div style="position:absolute;left:527px;top:355px;width:28px;height:16px;background:linear-gradient(to right, rgba(255,255,255,0), rgba(255,255,255,0.85) 85%);z-index:4"></div>
<svg style="position:absolute;left:561px;top:358px" width="8" height="11" viewBox="0 0 8 11"><path d="M5.5 1L2 5.5L5.5 10" fill="none" stroke="#dadce0" stroke-width="1.3"/></svg>
<svg style="position:absolute;left:578px;top:358px" width="8" height="11" viewBox="0 0 8 11"><path d="M2 1L5.5 5.5L2 10" fill="none" stroke="#5f6368" stroke-width="1.3"/></svg>
<div style="position:absolute;left:698px;top:143px;width:1px;height:192px;background:#ececec"></div>
<div class="t" style="left:398.00px;width:600px;text-align:center;top:337.03px;font-size:8px;line-height:8px;color:#5f6368;font-weight:400;transform:scaleX(0.93);transform-origin:center top;">0</div>
<div style="position:absolute;left:801px;top:143px;width:1px;height:192px;background:#ececec"></div>
<div class="t" style="left:501.30px;width:600px;text-align:center;top:337.03px;font-size:8px;line-height:8px;color:#5f6368;font-weight:400;transform:scaleX(0.93);transform-origin:center top;">10.000</div>
<div style="position:absolute;left:904px;top:143px;width:1px;height:192px;background:#ececec"></div>
<div class="t" style="left:604.60px;width:600px;text-align:center;top:337.03px;font-size:8px;line-height:8px;color:#5f6368;font-weight:400;transform:scaleX(0.93);transform-origin:center top;">20.000</div>
<div style="position:absolute;left:1007px;top:143px;width:1px;height:192px;background:#ececec"></div>
<div class="t" style="left:707.90px;width:600px;text-align:center;top:337.03px;font-size:8px;line-height:8px;color:#5f6368;font-weight:400;transform:scaleX(0.93);transform-origin:center top;">30.000</div>
<div style="position:absolute;left:698px;top:160.0px;width:349px;height:29.3px;background:#1a73e8"></div>
<div style="position:absolute;left:693px;top:175px;width:5px;height:1px;background:#dadce0"></div>
<div class="t" style="left:631.50px;top:170.24px;font-size:8.7px;line-height:8.7px;color:#202124;font-weight:400;">/</div>
<div style="position:absolute;left:698px;top:192.6px;width:345px;height:29.3px;background:#1a73e8"></div>
<div style="position:absolute;left:693px;top:207px;width:5px;height:1px;background:#dadce0"></div>
<div class="t" style="left:631.50px;top:197.79px;font-size:8.7px;line-height:8.7px;color:#202124;font-weight:400;">/cosa-fare-e-ve</div>
<div class="t" style="left:631.50px;top:207.79px;font-size:8.7px;line-height:8.7px;color:#202124;font-weight:400;">dere-nelle-ma...</div>
<div style="position:absolute;left:698px;top:225.1px;width:325px;height:29.3px;background:#1a73e8"></div>
<div style="position:absolute;left:693px;top:240px;width:5px;height:1px;background:#dadce0"></div>
<div class="t" style="left:631.50px;top:230.34px;font-size:8.7px;line-height:8.7px;color:#202124;font-weight:400;">/rasiglia-cosa-f</div>
<div class="t" style="left:631.50px;top:240.34px;font-size:8.7px;line-height:8.7px;color:#202124;font-weight:400;">are-e-vedere/</div>
<div style="position:absolute;left:698px;top:257.6px;width:256px;height:29.3px;background:#1a73e8"></div>
<div style="position:absolute;left:693px;top:272px;width:5px;height:1px;background:#dadce0"></div>
<div class="t" style="left:631.50px;top:262.89px;font-size:8.7px;line-height:8.7px;color:#202124;font-weight:400;">/percorso-delle-</div>
<div class="t" style="left:631.50px;top:272.89px;font-size:8.7px;line-height:8.7px;color:#202124;font-weight:400;">acque-pieve-t...</div>
<div style="position:absolute;left:698px;top:290.2px;width:253px;height:29.3px;background:#1a73e8"></div>
<div style="position:absolute;left:693px;top:305px;width:5px;height:1px;background:#dadce0"></div>
<div class="t" style="left:631.50px;top:295.44px;font-size:8.7px;line-height:8.7px;color:#202124;font-weight:400;">/cosa-fare-e-ved</div>
<div class="t" style="left:631.50px;top:305.44px;font-size:8.7px;line-height:8.7px;color:#202124;font-weight:400;">ere-nella-rivie...</div>
<div style="position:absolute;left:44px;top:387px;width:1026px;height:1px;background:#dadce0"></div>
<div style="position:absolute;left:44px;top:414px;width:1026px;height:1px;background:#dadce0"></div>
<div style="position:absolute;left:44px;top:498px;width:1026px;height:1px;background:#dadce0"></div>
<div style="position:absolute;left:292px;top:415px;width:1px;height:83px;background:#dadce0"></div>
<svg style="position:absolute;left:48px;top:395px" width="13" height="13" viewBox="0 0 13 13"><circle cx="5.4" cy="5" r="3.8" fill="none" stroke="#80868b" stroke-width="1.7"/><path d="M8.2 7.8L12 11.5" stroke="#80868b" stroke-width="1.9"/></svg>
<div class="t" style="left:68.20px;top:396.10px;font-size:9.8px;line-height:9.8px;color:#4d5156;font-weight:400;transform:scaleX(0.86);transform-origin:left top;">Cerca...</div>
<div class="t" style="left:764.70px;top:396.66px;font-size:8.67px;line-height:8.67px;color:#3c4043;font-weight:400;">Righe per pagina:</div>
<div class="t" style="left:848.40px;top:396.88px;font-size:9px;line-height:9px;color:#3c4043;font-weight:400;">10</div>
<svg style="position:absolute;left:868px;top:398.5px" width="7" height="4" viewBox="0 0 7 4"><path d="M0.3 0.3H6.5L3.4 3.6Z" fill="#5f6368"/></svg>
<div class="t" style="left:904.30px;top:396.66px;font-size:8.67px;line-height:8.67px;color:#3c4043;font-weight:400;">Vai a:</div>
<div class="t" style="left:945.00px;top:396.88px;font-size:9px;line-height:9px;color:#3c4043;font-weight:400;">1</div>
<svg style="position:absolute;left:982px;top:395px" width="8" height="12" viewBox="0 0 8 12"><path d="M6 1L2 6L6 11" fill="none" stroke="#9aa0a6" stroke-width="1.5"/></svg>
<div class="t" style="left:999.00px;top:396.55px;font-size:8.8px;line-height:8.8px;color:#3c4043;font-weight:400;">1-10 di 8056</div>
<svg style="position:absolute;left:1058px;top:395px" width="8" height="12" viewBox="0 0 8 12"><path d="M1.5 1L5.8 6L1.5 11" fill="none" stroke="#202124" stroke-width="1.7"/></svg>
<div class="t" style="left:82.80px;top:426.02px;font-size:9.43px;line-height:9.43px;color:#3c4043;font-weight:400;">Percorso pagina...asse schermata</div>
<svg style="position:absolute;left:234.5px;top:429.5px" width="7" height="4" viewBox="0 0 7 4"><path d="M0.3 0.3H6.5L3.4 3.6Z" fill="#5f6368"/></svg>
<svg style="position:absolute;left:268px;top:424px" width="11" height="11" viewBox="0 0 11 11"><path d="M5.5 1V10M1 5.5H10" stroke="#3061c2" stroke-width="1.2"/></svg>
<svg style="position:absolute;left:304px;top:426.5px" width="8" height="7" viewBox="0 0 8 7"><path d="M4 0V6.3M1 3.5L4 6.3L7 3.5" fill="none" stroke="#5f6368" stroke-width="1.1"/></svg>
<div class="t" style="left:-221.70px;width:600px;text-align:right;top:424.96px;font-size:9.5px;line-height:9.5px;color:#3c4043;font-weight:400;">Visualizzazioni</div>
<div class="t" style="left:-143.90px;width:600px;text-align:right;top:424.96px;font-size:9.5px;line-height:9.5px;color:#3c4043;font-weight:400;">Utenti</div>
<div class="t" style="left:-14.70px;width:600px;text-align:right;top:424.96px;font-size:9.5px;line-height:9.5px;color:#3c4043;font-weight:400;">Visualizzazioni per</div>
<div class="t" style="left:-14.70px;width:600px;text-align:right;top:437.56px;font-size:9.5px;line-height:9.5px;color:#3c4043;font-weight:400;">utente</div>
<div class="t" style="left:134.80px;width:600px;text-align:right;top:424.96px;font-size:9.5px;line-height:9.5px;color:#3c4043;font-weight:400;">Durata media del</div>
<div class="t" style="left:134.80px;width:600px;text-align:right;top:437.56px;font-size:9.5px;line-height:9.5px;color:#3c4043;font-weight:400;">coinvolgimento</div>
<div class="t" style="left:247.20px;width:600px;text-align:right;top:424.96px;font-size:9.5px;line-height:9.5px;color:#3c4043;font-weight:400;">Conteggio eventi</div>
<div class="t" style="left:358.40px;width:600px;text-align:right;top:424.96px;font-size:9.5px;line-height:9.5px;color:#3c4043;font-weight:400;">Conversioni</div>
<div class="t" style="left:458.60px;width:600px;text-align:right;top:424.96px;font-size:9.5px;line-height:9.5px;color:#3c4043;font-weight:400;">Entrate</div>
<div class="t" style="left:458.60px;width:600px;text-align:right;top:437.56px;font-size:9.5px;line-height:9.5px;color:#3c4043;font-weight:400;">totali</div>
<div class="t" style="left:775.00px;top:438.93px;font-size:9.3px;line-height:9.3px;color:#3c4043;font-weight:400;">Tutti gli eventi</div>
<svg style="position:absolute;left:842px;top:442.5px" width="7" height="4" viewBox="0 0 7 4"><path d="M0.3 0.3H6.5L3.4 3.6Z" fill="#5f6368"/></svg>
<div class="t" style="left:896.30px;top:438.93px;font-size:9.3px;line-height:9.3px;color:#3c4043;font-weight:400;">Tutti gli eventi</div>
<svg style="position:absolute;left:963px;top:442.5px" width="7" height="4" viewBox="0 0 7 4"><path d="M0.3 0.3H6.5L3.4 3.6Z" fill="#5f6368"/></svg>
<div style="position:absolute;left:315.8px;top:437px;width:62.5px;height:1px;background-image:linear-gradient(to right,#80868b 55%,transparent 55%);background-size:4.2px 1px"></div>
<div style="position:absolute;left:430.5px;top:437px;width:25.600000000000023px;height:1px;background-image:linear-gradient(to right,#80868b 55%,transparent 55%);background-size:4.2px 1px"></div>
<div style="position:absolute;left:506px;top:437px;width:79.29999999999995px;height:1px;background-image:linear-gradient(to right,#80868b 55%,transparent 55%);background-size:4.2px 1px"></div>
<div style="position:absolute;left:557px;top:450px;width:28.299999999999955px;height:1px;background-image:linear-gradient(to right,#80868b 55%,transparent 55%);background-size:4.2px 1px"></div>
<div style="position:absolute;left:665px;top:437px;width:69.79999999999995px;height:1px;background-image:linear-gradient(to right,#80868b 55%,transparent 55%);background-size:4.2px 1px"></div>
<div style="position:absolute;left:672px;top:450px;width:62.799999999999955px;height:1px;background-image:linear-gradient(to right,#80868b 55%,transparent 55%);background-size:4.2px 1px"></div>
<div style="position:absolute;left:777.7px;top:437px;width:69.5px;height:1px;background-image:linear-gradient(to right,#80868b 55%,transparent 55%);background-size:4.2px 1px"></div>
<div style="position:absolute;left:909.5px;top:437px;width:48.89999999999998px;height:1px;background-image:linear-gradient(to right,#80868b 55%,transparent 55%);background-size:4.2px 1px"></div>
<div style="position:absolute;left:1028px;top:437px;width:30.59999999999991px;height:1px;background-image:linear-gradient(to right,#80868b 55%,transparent 55%);background-size:4.2px 1px"></div>
<div style="position:absolute;left:1036px;top:450px;width:22.59999999999991px;height:1px;background-image:linear-gradient(to right,#80868b 55%,transparent 55%);background-size:4.2px 1px"></div>
<div class="t" style="left:-221.70px;width:600px;text-align:right;top:467.34px;font-size:9.4px;line-height:9.4px;color:#202124;font-weight:400;transform:scaleX(0.88);transform-origin:right top;">1.161.996</div>
<div class="t" style="left:-221.70px;width:600px;text-align:right;top:484.26px;font-size:8.2px;line-height:8.2px;color:#5f6368;font-weight:400;">100% del totale</div>
<div class="t" style="left:-143.90px;width:600px;text-align:right;top:467.34px;font-size:9.4px;line-height:9.4px;color:#202124;font-weight:400;transform:scaleX(0.88);transform-origin:right top;">669.281</div>
<div class="t" style="left:-143.90px;width:600px;text-align:right;top:484.26px;font-size:8.2px;line-height:8.2px;color:#5f6368;font-weight:400;">100% del totale</div>
<div class="t" style="left:-14.70px;width:600px;text-align:right;top:467.34px;font-size:9.4px;line-height:9.4px;color:#202124;font-weight:400;transform:scaleX(0.88);transform-origin:right top;">1,74</div>
<div class="t" style="left:-14.70px;width:600px;text-align:right;top:484.26px;font-size:8.2px;line-height:8.2px;color:#5f6368;font-weight:400;">Uguale alla media</div>
<div class="t" style="left:134.80px;width:600px;text-align:right;top:467.34px;font-size:9.4px;line-height:9.4px;color:#202124;font-weight:400;transform:scaleX(0.88);transform-origin:right top;">56 s</div>
<div class="t" style="left:134.80px;width:600px;text-align:right;top:484.26px;font-size:8.2px;line-height:8.2px;color:#5f6368;font-weight:400;">Uguale alla media</div>
<div class="t" style="left:256.40px;width:600px;text-align:right;top:467.34px;font-size:9.4px;line-height:9.4px;color:#202124;font-weight:400;transform:scaleX(0.88);transform-origin:right top;">3.260.817</div>
<div class="t" style="left:256.40px;width:600px;text-align:right;top:484.26px;font-size:8.2px;line-height:8.2px;color:#5f6368;font-weight:400;">100% del totale</div>
<div class="t" style="left:377.50px;width:600px;text-align:right;top:467.34px;font-size:9.4px;line-height:9.4px;color:#202124;font-weight:400;transform:scaleX(0.88);transform-origin:right top;">57,00</div>
<div class="t" style="left:377.50px;width:600px;text-align:right;top:484.26px;font-size:8.2px;line-height:8.2px;color:#5f6368;font-weight:400;">100% del totale</div>
<div class="t" style="left:458.60px;width:600px;text-align:right;top:467.34px;font-size:9.4px;line-height:9.4px;color:#202124;font-weight:400;transform:scaleX(0.88);transform-origin:right top;">0,00 $</div>
</body></html>
